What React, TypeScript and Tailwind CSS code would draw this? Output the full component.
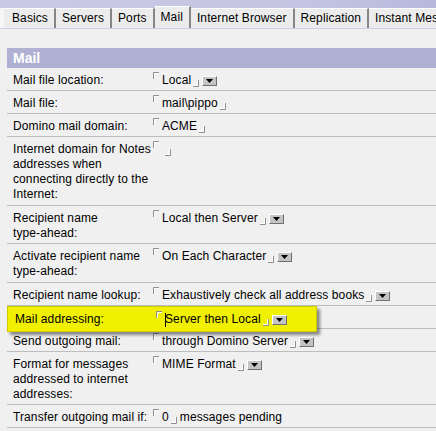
import type { ReactNode } from "react";

const tabs = ["Basics", "Servers", "Ports", "Mail", "Internet Browser", "Replication", "Instant Messaging"];

function OpenMark() {
  return (
    <svg width="6" height="7" viewBox="0 0 6 7" className="mt-[-1px] shrink-0" fill="none">
      <path d="M0.5 7V0.5H6" stroke="#8e8e8e" />
      <path d="M1.5 7V1.5H6" stroke="#ffffff" />
    </svg>
  );
}

function CloseMark() {
  return (
    <svg width="6" height="7" viewBox="0 0 6 7" className="mb-[1px] shrink-0 self-end" fill="none">
      <path d="M0 6.5H5.5V0" stroke="#8e8e8e" />
      <path d="M0 5.5H4.5V0" stroke="#ffffff" />
    </svg>
  );
}

function DropButton() {
  return (
    <span className="ml-[3px] flex h-[10px] w-[15px] shrink-0 items-center justify-center self-center border border-b-[#707070] border-l-white border-r-[#707070] border-t-white bg-[#c4c4c4]">
      <svg width="7" height="4" viewBox="0 0 7 4">
        <path d="M0 0H7L3.5 4Z" fill="#000" />
      </svg>
    </span>
  );
}

function Field({ text, drop, cursor }: { text?: string; drop?: boolean; cursor?: boolean }) {
  return (
    <div className="flex h-[15px] items-start">
      <OpenMark />
      {text !== undefined ? (
        <span className="ml-[3px] flex items-center whitespace-nowrap">
          {cursor && <span className="mr-[-1px] h-[14px] w-px bg-black" />}
          {text}
        </span>
      ) : (
        <span className="w-[4px]" />
      )}
      <span className="ml-[2px] flex self-stretch">
        <CloseMark />
      </span>
      {drop && <DropButton />}
    </div>
  );
}

type Row = { label: ReactNode; key: string; value: ReactNode; extra?: string };

const rows: Row[] = [
  { key: "loc", label: "Mail file location:", value: <Field text="Local" drop /> },
  { key: "file", label: "Mail file:", value: <Field text={"mail\\pippo"} /> },
  { key: "dom", label: "Domino mail domain:", value: <Field text="ACME" /> },
  {
    key: "inet",
    label: "Internet domain for Notes addresses when connecting directly to the Internet:",
    value: <Field />,
    extra: "pb-[3px]",
  },
  {
    key: "rta",
    label: (
      <>
        Recipient name <span className="whitespace-nowrap">type-ahead:</span>
      </>
    ),
    value: <Field text="Local then Server" drop />,
  },
  {
    key: "act",
    label: (
      <>
        Activate recipient name <span className="whitespace-nowrap">type-ahead:</span>
      </>
    ),
    value: <Field text="On Each Character" drop />,
    extra: "pb-[3px]",
  },
  { key: "look", label: "Recipient name lookup:", value: <Field text="Exhaustively check all address books" drop /> },
];

const rowsAfter: Row[] = [
  { key: "send", label: "Send outgoing mail:", value: <Field text="through Domino Server" drop /> },
  { key: "fmt", label: "Format for messages addressed to internet addresses:", value: <Field text="MIME Format" drop /> },
  {
    key: "xfer",
    label: "Transfer outgoing mail if:",
    value: (
      <div className="flex items-start">
        <Field text="0" />
        <span className="ml-[3px]">messages pending</span>
      </div>
    ),
  },
];

function SettingRow({ row }: { row: Row }) {
  return (
    <div className={`flex border-b border-[#bdbdbd] pt-[5px] ${row.extra ?? "pb-[2px]"}`}>
      <div className="w-[146px] shrink-0 pl-[6px]">{row.label}</div>
      <div>{row.value}</div>
    </div>
  );
}

export default function App() {
  return (
    <div className="h-[431px] w-[436px] overflow-hidden bg-[#f0f0f0] font-['Liberation_Sans',Arial,sans-serif] text-[12px] leading-[15px] tracking-[0.1px] text-black">
      <div className="flex h-[29px] items-end overflow-hidden border-b border-[#d6cce2] bg-[linear-gradient(90deg,#cacae6_0%,#c4c4e2_70%,#b8b8dc_100%)]">
        <div className="h-[20px] w-[4px] shrink-0 bg-[#f6f6f6]" />
        {tabs.map((t, i) => (
          <div
            key={t}
            className={`flex shrink-0 items-center whitespace-nowrap border-r-2 border-t border-r-[#858585] border-t-white bg-[#ececec] pr-[6px] ${
              i === 0 ? "pl-[8px]" : "pl-[6px]"
            } ${t === "Mail" ? "h-[22px]" : "h-[20px]"}`}
          >
            {t}
          </div>
        ))}
      </div>

      <div className="pl-[7px] pt-[19px]">
        <div className="flex h-[20px] items-center bg-[#b0b0d2] pl-[6px] text-[14px] font-bold tracking-normal text-white">
          Mail
        </div>

        {rows.map((r) => (
          <SettingRow key={r.key} row={r} />
        ))}

        <div className="relative flex h-[23px] border-b border-[#bdbdbd]">
          <div className="absolute left-0 top-0 h-[26px] w-[310px] border border-[#cccc00] bg-[#f0f000] shadow-[3px_3px_3px_rgba(0,0,0,0.45)]" />
          <div className="relative flex pt-[6px]">
            <div className="w-[148px] shrink-0 pl-[8px]">Mail addressing:</div>
            <div className="pl-[1px]">
              <Field text="Server then Local" drop cursor />
            </div>
          </div>
        </div>

        {rowsAfter.map((r) => (
          <SettingRow key={r.key} row={r} />
        ))}
      </div>
    </div>
  );
}
